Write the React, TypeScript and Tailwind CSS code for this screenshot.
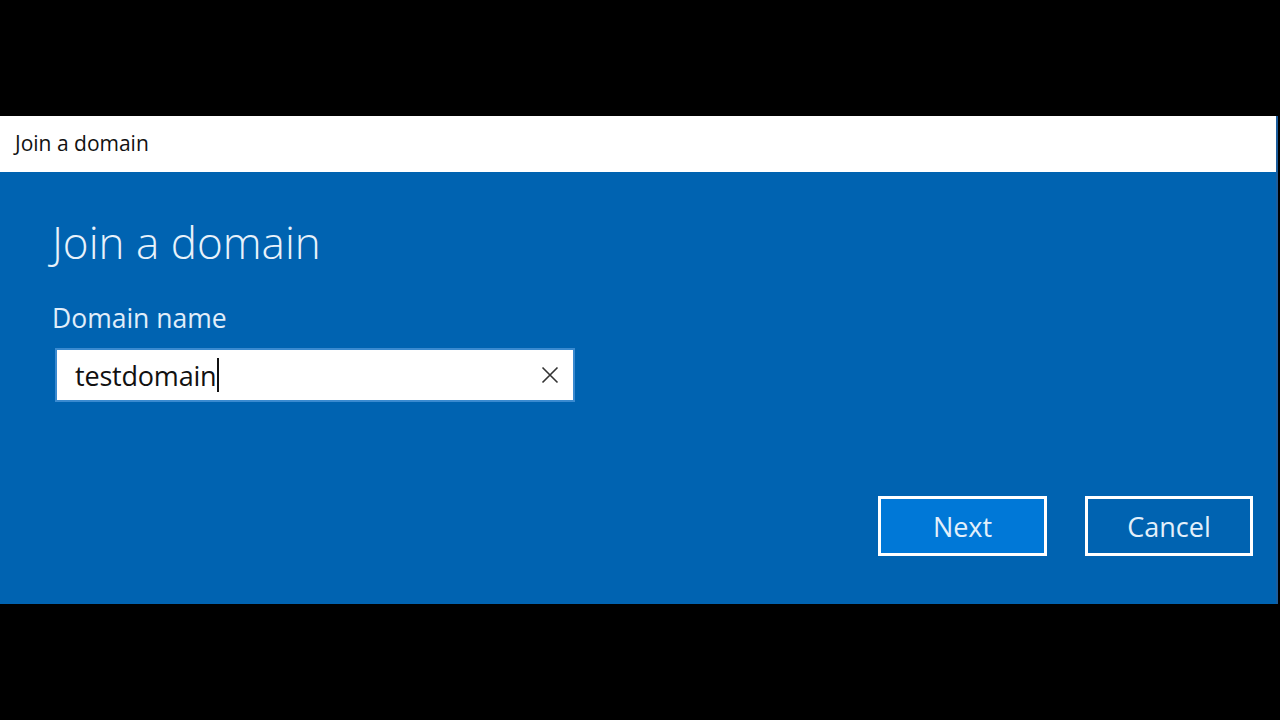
export default function App() {
    return (
        <div className="w-[1280px] h-[720px] bg-black flex flex-col overflow-hidden" style={{ fontFamily: '"Open Sans", "Noto Sans", sans-serif' }}>
            <div className="h-[116px] shrink-0" />
            <div className="w-[1278px] h-[488px] flex flex-col border-r-2 border-[#1b5c9c]">
                {/* title bar */}
                <div className="h-[56px] bg-white flex items-center pl-[15px] pb-[1px]">
                    <span className="text-[21px] text-[#111] leading-none">Join a domain</span>
                </div>

                {/* body */}
                <div className="flex-1 bg-[#0063b1] flex flex-col pl-[52px] pr-[23px] pb-[48px]">
                    <h1 className="mt-[44px] text-[44px] font-light text-[#e8f2fb] leading-[52px]">Join a domain</h1>

                    <label className="mt-[34px] text-[26.5px] text-[#e1eefa] leading-[32px]">Domain name</label>

                    <div className="mt-[14px] ml-[3px] w-[520px] h-[54px] bg-white border-2 border-[#3a8ad0] flex items-center pl-[18px] pr-[14px]">
                        <span className="text-[27px] text-[#111] leading-none tracking-[-0.2px]">testdomain</span>
                        <span className="w-[2px] h-[34px] bg-[#111] ml-[1px]" />
                        <div className="flex-1" />
                        <svg width="18" height="18" viewBox="0 0 18 18" className="text-[#333]">
                            <path d="M1.5 1.5 L16.5 16.5 M16.5 1.5 L1.5 16.5" stroke="currentColor" strokeWidth="1.6" fill="none" />
                        </svg>
                    </div>

                    <div className="flex-1" />

                    <div className="flex justify-end gap-[38px]">
                        <button className="w-[169px] h-[60px] border-[3px] border-white bg-[#0078d7] text-[27px] text-[#e3f0fb] leading-none">
                            Next
                        </button>
                        <button className="w-[168px] h-[60px] border-[3px] border-white bg-[#0063b1] text-[27px] text-[#e3f0fb] leading-none">
                            Cancel
                        </button>
                    </div>
                </div>
            </div>
        </div>
    );
}
